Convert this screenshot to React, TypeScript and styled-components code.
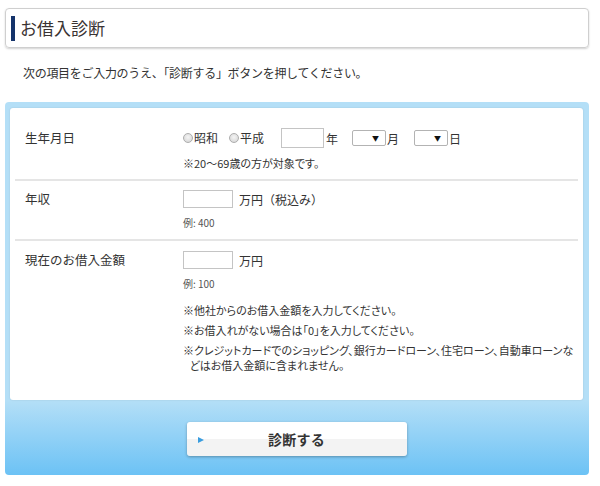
import React from "react";
import styled, { createGlobalStyle } from "styled-components";

const Global = createGlobalStyle`
  html, body { margin: 0; padding: 0; background: #fff; }
  body {
    font-family: "Noto Sans CJK JP", "Liberation Sans", sans-serif;
    color: #333;
  }
  * { box-sizing: border-box; }
`;

const Page = styled.div`
  width: 600px;
  padding: 8px 11px 0 5px;
`;

const Header = styled.div`
  height: 40px;
  border: 1px solid #cfcfcf;
  border-radius: 4px;
  box-shadow: 0 1px 2px rgba(0, 0, 0, 0.18);
  display: flex;
  align-items: center;
  padding-left: 5px;
`;

const HeaderBar = styled.span`
  width: 4px;
  height: 25px;
  background: #15336b;
  margin-right: 5px;
`;

const Title = styled.h1`
  margin: 0;
  font-size: 17px;
  font-weight: normal;
  color: #3a3333;
  line-height: 24px;
`;

const Lead = styled.p`
  margin: 16px 0 20px;
  padding-left: 18px;
  font-size: 12px;
  line-height: 18px;
  letter-spacing: -0.3px;
`;

const Panel = styled.div`
  width: 584px;
  border-radius: 4px;
  padding: 6px 6px 19px 5px;
  background: linear-gradient(to bottom, #b4dff7 0%, #b4dff7 80%, #6cc2f5 100%);
`;

const FormBox = styled.div`
  background: #fff;
  border-radius: 3px;
  box-shadow: 0 0 2px rgba(0, 0, 0, 0.12);
  padding: 10px 5px 0;
`;

const Row = styled.div<{ $last?: boolean; $top?: number; $bottom?: number }>`
  display: grid;
  grid-template-columns: 158px 1fr;
  padding: ${(p) => p.$top ?? 9}px 0 ${(p) => p.$bottom ?? 9}px 10px;
  border-bottom: ${(p) => (p.$last ? "none" : "2px solid #e5e5e5")};
`;

const Label = styled.div`
  font-size: 12.5px;
  line-height: 20px;
`;

const Field = styled.div`
  display: flex;
  flex-direction: column;
`;

const Line = styled.div`
  height: 20px;
  display: flex;
  align-items: center;
  font-size: 12px;
`;

const Radio = styled.label`
  display: inline-flex;
  align-items: center;
  margin-right: 11px;
  font-size: 12px;
  line-height: 20px;
`;

const RadioDot = styled.span`
  width: 10px;
  height: 10px;
  border-radius: 50%;
  border: 1px solid #adadad;
  background: radial-gradient(circle at 50% 40%, #f4f4f4 0%, #d2d2d2 100%);
  margin-right: 1px;
`;

const TextBox = styled.span<{ $w: number; $h: number; $ml?: number }>`
  display: inline-block;
  width: ${(p) => p.$w}px;
  height: ${(p) => p.$h}px;
  margin-left: ${(p) => p.$ml ?? 0}px;
  border: 1px solid #c4c4c4;
  background: #fff;
`;

const Unit = styled.span<{ $gap?: number; $after?: number }>`
  margin-left: ${(p) => p.$gap ?? 2}px;
  margin-right: ${(p) => p.$after ?? 0}px;
  font-size: 12px;
`;

const Select = styled.span`
  width: 34px;
  height: 16px;
  border: 1px solid #b3b3b3;
  border-radius: 2px;
  background: #fff;
  display: inline-flex;
  align-items: center;
  justify-content: flex-end;
  padding-right: 6px;
  font-size: 7px;
  color: #111;
  line-height: 1;
`;

const Note = styled.div<{ $mt?: number }>`
  margin-top: ${(p) => p.$mt ?? 7}px;
  font-size: 11px;
  line-height: 16px;
  font-feature-settings: "palt";
`;

const Example = styled.div`
  margin-top: 7px;
  font-size: 10px;
  line-height: 14px;
  color: #555;
`;

const Notes = styled.ul`
  list-style: none;
  margin: 12px 0 0;
  padding: 0;
  font-feature-settings: "palt";
`;

const NoteItem = styled.li`
  font-size: 11px;
  line-height: 15px;
  margin-bottom: 5px;
  padding-left: 0.6em;
  text-indent: -0.6em;
  white-space: nowrap;
  &:last-child { margin-bottom: 0; }
`;

const ButtonArea = styled.div`
  display: flex;
  justify-content: center;
  padding-top: 22px;
`;

const Button = styled.button`
  position: relative;
  width: 220px;
  height: 34px;
  border: none;
  border-radius: 3px;
  background: linear-gradient(to bottom, #ffffff 0%, #ffffff 50%, #f3f3f3 50%, #f3f3f3 100%);
  box-shadow: 0 1px 3px rgba(0, 0, 0, 0.3);
  font-family: "Noto Sans CJK JP", "Liberation Sans", sans-serif;
  font-size: 14px;
  font-weight: bold;
  color: #333;
  letter-spacing: 0.3px;
  cursor: pointer;
  padding: 0;
`;

const Arrow = styled.span`
  position: absolute;
  left: 11px;
  top: 50%;
  margin-top: -2px;
  width: 0;
  height: 0;
  border-top: 3px solid transparent;
  border-bottom: 3px solid transparent;
  border-left: 6px solid #3a9ddf;
`;

export default function App() {
  return (
    <>
      <Global />
      <Page>
        <Header>
          <HeaderBar />
          <Title>お借入診断</Title>
        </Header>
        <Lead>次の項目をご入力のうえ、「診断する」ボタンを押してください。</Lead>
        <Panel>
          <FormBox>
            <Row $top={10} $bottom={8}>
              <Label>生年月日</Label>
              <Field>
                <Line>
                  <Radio>
                    <RadioDot />
                    昭和
                  </Radio>
                  <Radio>
                    <RadioDot />
                    平成
                  </Radio>
                  <TextBox $w={43} $h={20} $ml={6} />
                  <Unit $after={14}>年</Unit>
                  <Select>▼</Select>
                  <Unit $gap={1} $after={15}>月</Unit>
                  <Select>▼</Select>
                  <Unit $gap={1}>日</Unit>
                </Line>
                <Note>※20～69歳の方が対象です。</Note>
              </Field>
            </Row>
            <Row $top={8}>
              <Label>年収</Label>
              <Field>
                <Line>
                  <TextBox $w={50} $h={18} />
                  <Unit $gap={6}>万円（税込み）</Unit>
                </Line>
                <Example>例: 400</Example>
              </Field>
            </Row>
            <Row $last $bottom={27}>
              <Label>現在のお借入金額</Label>
              <Field>
                <Line>
                  <TextBox $w={50} $h={18} />
                  <Unit $gap={6}>万円</Unit>
                </Line>
                <Example>例: 100</Example>
                <Notes>
                  <NoteItem>※他社からのお借入金額を入力してください。</NoteItem>
                  <NoteItem>※お借入れがない場合は「0」を入力してください。</NoteItem>
                  <NoteItem>
                    ※クレジットカードでのショッピング、銀行カードローン、住宅ローン、自動車ローンな
                    <br />
                    どはお借入金額に含まれません。
                  </NoteItem>
                </Notes>
              </Field>
            </Row>
          </FormBox>
          <ButtonArea>
            <Button type="button">
              <Arrow />
              診断する
            </Button>
          </ButtonArea>
        </Panel>
      </Page>
    </>
  );
}
